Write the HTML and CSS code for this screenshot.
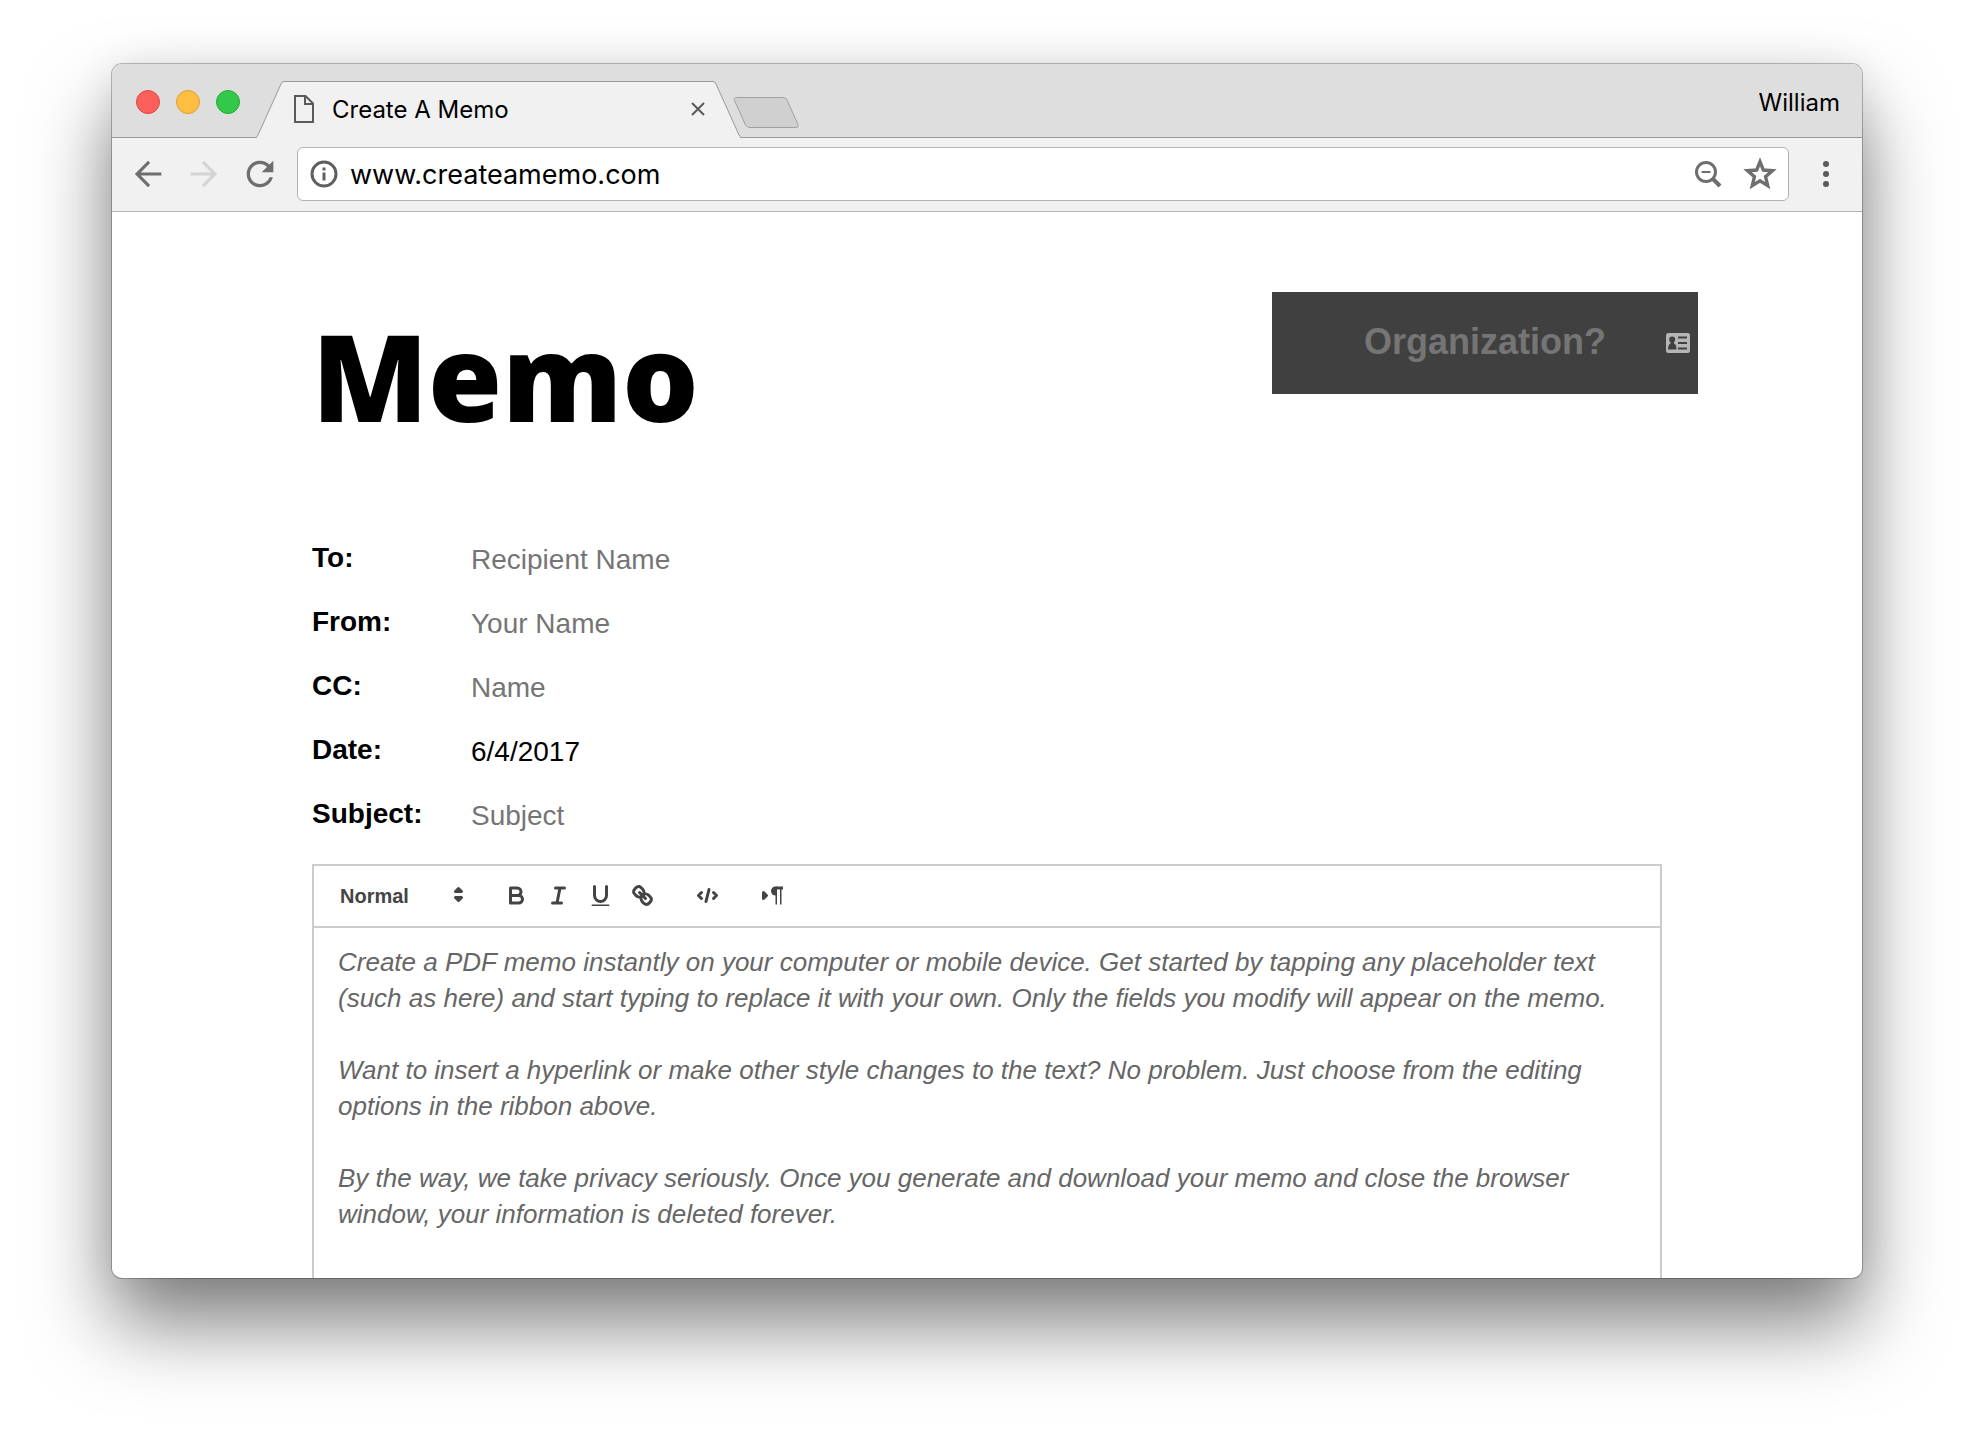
FILE: index.html
```html
<!DOCTYPE html>
<html lang="en">
<head>
<meta charset="utf-8">
<meta name="viewport" content="width=device-width, initial-scale=1">
<title>Create A Memo</title>
<link rel="stylesheet" href="styles.css">
</head>
<body>
<div class="window">
  <div class="tab-strip">
    <div class="lights">
      <button class="light light-close" aria-label="Close window"></button>
      <button class="light light-minimize" aria-label="Minimize window"></button>
      <button class="light light-zoom" aria-label="Zoom window"></button>
    </div>
    <div class="tab">
      <svg class="slope" viewBox="0 0 28 57" aria-hidden="true"><path class="slope-fill" d="M0 57 Q1 56 2 54 L25 3 Q26 0.5 28 0.500 V57Z"/><path class="slope-line" d="M0 56.500 Q1 56 2 54 L25 3 Q26 0.500 28 0.500"/></svg>
      <div class="tab-body">
        <svg class="file-icon" viewBox="0 0 20 28" aria-hidden="true"><path d="M1 1H11.500L19 8.500V27H1Z M11 1V9H19"/></svg>
        <span class="tab-title">Create A Memo</span>
        <button class="tab-close" aria-label="Close tab"><svg viewBox="0 0 14 14"><path d="M1 1L13 13M13 1L1 13"/></svg></button>
      </div>
      <svg class="slope" viewBox="0 0 28 57" aria-hidden="true"><path class="slope-fill" d="M28 57 Q27 56 26 54 L3 3 Q2 0.500 0 0.500 V57Z"/><path class="slope-line" d="M28 56.500 Q27 56 26 54 L3 3 Q2 0.500 0 0.500"/></svg>
    </div>
    <button class="new-tab" aria-label="New tab"><svg viewBox="0 0 66 32"><path d="M4 .5H50Q53 .5 54 3L65 27.500Q66 30.500 63 30.500H17Q14 30.500 12.500 28L1.500 3.500Q.5 .5 4 .5Z"/></svg></button>
    <button class="profile">William</button>
  </div>

  <div class="nav-bar">
    <div class="nav-buttons">
      <button class="nav-button" aria-label="Back"><svg viewBox="0 0 24 24"><path d="M20 11.100H7.600l5.700-5.700L12 4.100 4.100 12l7.900 7.900 1.300-1.300-5.700-5.700H20z"/></svg></button>
      <button class="nav-button" aria-label="Forward" disabled><svg viewBox="0 0 24 24"><path d="M4 11.100h12.400l-5.700-5.700L12 4.100l7.900 7.900-7.900 7.900-1.300-1.300 5.700-5.700H4z"/></svg></button>
      <button class="nav-button" aria-label="Reload"><svg viewBox="0 0 24 24"><path d="M17.650 6.350C16.200 4.900 14.210 4 12 4c-4.420 0-7.990 3.580-7.990 8s3.570 8 7.990 8c3.730 0 6.840-2.550 7.730-6h-2.080c-.82 2.330-3.040 4-5.650 4-3.310 0-6-2.690-6-6s2.690-6 6-6c1.660 0 3.140.69 4.220 1.780L13 11h7V4l-2.350 2.350z"/></svg></button>
    </div>
    <div class="omnibox">
      <svg class="info-icon" viewBox="0 0 28 28" aria-hidden="true"><circle cx="14" cy="14" r="12"/><path d="M14 7.500V10.500M14 12.500V20.500"/></svg>
      <input class="url" type="text" aria-label="Address" value="www.createamemo.com">
      <button class="box-button" aria-label="Zoom out"><svg class="zoom-icon" viewBox="0 0 30 30"><circle cx="13" cy="13" r="9.500"/><path d="M8.500 13H17.500" stroke-width="2"/><path d="M20 20L27 27" stroke-width="4"/></svg></button>
      <button class="box-button" aria-label="Bookmark this page"><svg class="star-icon" viewBox="0 0 30 30"><path d="M15 4.200L18 11.500L26 12.100L19.900 17.300L21.800 25.300L15 21L8.200 25.300L10.100 17.300L4 12.100L12 11.500Z"/></svg></button>
    </div>
    <button class="menu" aria-label="Menu"><svg viewBox="0 0 6 26"><circle cx="3" cy="3" r="3"/><circle cx="3" cy="13" r="3"/><circle cx="3" cy="23" r="3"/></svg></button>
  </div>

  <main class="page">
    <header class="memo-head">
      <h1 class="memo-title">Memo</h1>
      <div class="organization">
        <input class="organization-input" type="text" aria-label="Organization" placeholder="Organization?">
        <svg class="card-icon" viewBox="0 0 24 20" aria-hidden="true"><rect class="card" width="24" height="20" rx="2.500"/><g class="card-ink"><circle cx="6.200" cy="6.500" r="3"/><path d="M4.500 8H8V10.500Q10.500 11.500 10.500 16.500H2Q2 11.500 4.500 10.500Z"/><path d="M12 3.500H21V5.500H12ZM12 9H21V11H12ZM12 14.500H21V16.500H12Z"/></g></svg>
      </div>
    </header>

    <form class="fields">
      <div class="field"><label for="to">To:</label><input id="to" type="text" placeholder="Recipient Name"></div>
      <div class="field"><label for="from">From:</label><input id="from" type="text" placeholder="Your Name"></div>
      <div class="field"><label for="cc">CC:</label><input id="cc" type="text" placeholder="Name"></div>
      <div class="field"><label for="date">Date:</label><input id="date" type="text" value="6/4/2017"></div>
      <div class="field"><label for="subject">Subject:</label><input id="subject" type="text" placeholder="Subject"></div>
    </form>

    <section class="editor">
      <div class="ribbon">
        <div class="picker">
          <select aria-label="Text style"><option>Normal</option><option>Large</option><option>Huge</option></select>
          <svg class="picker-icon" viewBox="0 0 18 18" aria-hidden="true"><polygon class="both" points="7 11 9 13 11 11 7 11"/><polygon class="both" points="7 7 9 5 11 7 7 7"/></svg>
        </div>
        <div class="group">
          <button aria-label="Bold"><svg viewBox="0 0 18 18"><path d="M5,4H9.500A2.500,2.500,0,0,1,12,6.500v0A2.500,2.500,0,0,1,9.500,9H5V4Z"/><path d="M5,9h5.500A2.500,2.500,0,0,1,13,11.500v0A2.500,2.500,0,0,1,10.500,14H5V9Z"/></svg></button>
          <button aria-label="Italic"><svg viewBox="0 0 18 18"><path d="M7 4H13M5 14H11M8 14L10 4"/></svg></button>
          <button aria-label="Underline"><svg viewBox="0 0 18 18"><path d="M5,3V9a4.012,4.012,0,0,0,4,4H9a4.012,4.012,0,0,0,4-4V3"/><rect class="solid" x="3" y="15" width="12" height="1" rx=".5"/></svg></button>
          <button aria-label="Link"><svg viewBox="0 0 18 18"><path d="M7 7L11 11"/><path d="M8.900,4.577a3.476,3.476,0,0,1,.36,4.679A3.476,3.476,0,0,1,4.577,8.900C3.185,7.500,2.035,6.400,4.217,4.217S7.500,3.185,8.900,4.577Z"/><path d="M13.423,9.100a3.476,3.476,0,0,0-4.679-.36,3.476,3.476,0,0,0,.36,4.679c1.392,1.392,2.500,2.542,4.679.36S14.815,10.500,13.423,9.100Z"/></svg></button>
        </div>
        <div class="group">
          <button aria-label="Code"><svg viewBox="0 0 18 18"><path d="M5 7L3 9L5 11M13 7L15 9L13 11M10 5L8 13"/></svg></button>
        </div>
        <div class="group">
          <button aria-label="Text direction"><svg viewBox="0 0 18 18"><polygon class="both" points="3 11 5 9 3 7 3 11"/><path class="solid" d="M11,3a3,3,0,0,0,0,6h1V3H11Z"/><path class="solid" d="M11 3H16V5H15V15H14V5H12V15H11Z"/></svg></button>
        </div>
      </div>
      <div class="editor-body" contenteditable="true" role="textbox" aria-multiline="true" aria-label="Memo text" spellcheck="false">
        <p>Create a PDF memo instantly on your computer or mobile device. Get started by tapping any placeholder text (such as here) and start typing to replace it with your own. Only the fields you modify will appear on the memo.</p>
        <p>Want to insert a hyperlink or make other style changes to the text? No problem. Just choose from the editing options in the ribbon above.</p>
        <p>By the way, we take privacy seriously. Once you generate and download your memo and close the browser window, your information is deleted forever.</p>
      </div>
    </section>
  </main>
</div>
</body>
</html>
```
FILE: styles.css
```css
* {
  box-sizing: border-box;
}

body {
  margin: 0;
  min-height: 100vh;
  padding: 64px 112px 160px;
  display: flex;
  background: #fff;
  color: #000;
  font-family: "Liberation Sans", Arial, sans-serif;
  overflow-x: hidden;
}

button,
input,
select {
  margin: 0;
  padding: 0;
  border: 0;
  background: none;
  color: inherit;
  font: inherit;
}

svg {
  display: block;
  flex: none;
}

.window {
  flex: 1;
  min-width: 0;
  display: flex;
  flex-direction: column;
  overflow: hidden;
  border-radius: 10px;
  background: #fff;
  box-shadow: 0 0 0 1px rgba(0, 0, 0, 0.25), 0 46px 80px rgba(0, 0, 0, 0.5), 0 0 40px rgba(0, 0, 0, 0.08);
}

/* Tab strip */
.tab-strip {
  display: flex;
  align-items: flex-end;
  height: 74px;
  padding: 0 22px 0 24px;
  border-bottom: 1px solid #999;
  background: #dedede;
  font-family: Inter, sans-serif;
  font-size: 24px;
}

.lights {
  display: flex;
  gap: 16px;
  align-self: center;
  padding: 2px 16px 0 0;
}

.light {
  width: 24px;
  height: 24px;
  border: 1px solid;
  border-radius: 50%;
}

.light-close {
  border-color: #e0443e;
  background: #fc605b;
}

.light-minimize {
  border-color: #dea034;
  background: #fdbe41;
}

.light-zoom {
  border-color: #27aa35;
  background: #34c84a;
}

.tab {
  display: flex;
  flex: 0 1 485px;
  min-width: 0;
  height: 57px;
  margin-bottom: -1px;
}

.slope {
  width: 28px;
  height: 57px;
}

.slope-fill {
  fill: #f1f1f1;
}

.slope-line {
  fill: none;
  stroke: #999;
}

.tab-body {
  flex: 1;
  min-width: 0;
  display: flex;
  align-items: center;
  padding: 0 8px 2px 10px;
  border-top: 1px solid #999;
  background: #f1f1f1;
}

.file-icon {
  width: 20px;
  height: 28px;
  fill: none;
  stroke: #5a5a5a;
  stroke-width: 2;
}

.tab-title {
  flex: 1;
  padding-left: 18px;
  white-space: nowrap;
}

.tab-close svg {
  width: 14px;
  height: 14px;
  stroke: #5a5a5a;
  stroke-width: 2;
}

.new-tab {
  align-self: flex-end;
  margin: 0 0 8px -8px;
}

.new-tab svg {
  width: 66px;
  height: 32px;
  fill: #d0d0d0;
  stroke: #a0a0a0;
}

.profile {
  align-self: center;
  margin-left: auto;
  padding-top: 4px;
}

/* Navigation bar */
.nav-bar {
  display: flex;
  align-items: center;
  height: 74px;
  padding: 0 0 1px 16px;
  border-bottom: 1px solid #b2b2b2;
  background: #f1f1f1;
}

.nav-buttons {
  display: flex;
  gap: 16px;
  padding-right: 17px;
}

.nav-button {
  color: #6e6e6e;
}

.nav-button:disabled {
  color: #d4d4d4;
}

.nav-button svg {
  width: 40px;
  height: 40px;
  fill: currentColor;
}

.omnibox {
  flex: 1;
  min-width: 0;
  display: flex;
  align-items: center;
  height: 54px;
  padding: 0 11px 0 12px;
  border: 1px solid #b2b2b2;
  border-radius: 6px;
  background: #fff;
}

.info-icon {
  width: 28px;
  height: 28px;
  fill: none;
  stroke: #5f5f5f;
  stroke-width: 3;
}

.url {
  flex: 1;
  min-width: 0;
  padding-left: 12px;
  font-family: Inter, sans-serif;
  font-size: 27px;
}

.box-button {
  margin-left: 20px;
}

.zoom-icon,
.star-icon {
  fill: none;
  stroke: #6e6e6e;
  stroke-width: 3;
}

.zoom-icon {
  width: 30px;
  height: 30px;
}

.star-icon {
  width: 34px;
  height: 34px;
}

.menu {
  display: flex;
  justify-content: center;
  width: 73px;
}

.menu svg {
  width: 6px;
  height: 26px;
  fill: #5a5a5a;
}

/* Memo page */
.page {
  flex: 1;
  display: flex;
  flex-direction: column;
  padding: 80px 200px 0;
}

.memo-head {
  display: flex;
  justify-content: space-between;
  align-items: flex-start;
  margin: 0 -36px 80px 0;
}

.memo-title {
  margin: 12px 0 0;
  font-family: "Open Sans", Inter, sans-serif;
  font-size: 120px;
  font-weight: 800;
  line-height: 144px;
}

.organization {
  position: relative;
  width: 426px;
  height: 102px;
  background: #404040;
}

.organization-input {
  width: 100%;
  height: 100px;
  color: #fff;
  font-size: 36px;
  font-weight: 700;
  text-align: center;
}

.organization-input::placeholder,
.field input::placeholder {
  color: #757575;
  opacity: 1;
}

.card-icon {
  position: absolute;
  top: 41px;
  right: 8px;
  width: 24px;
  height: 20px;
}

.card {
  fill: #b5b5b5;
}

.card-ink {
  fill: #404040;
}

.field {
  display: flex;
  align-items: center;
  height: 64px;
  font-size: 28px;
  line-height: 32px;
}

.field label {
  width: 159px;
  padding-bottom: 4px;
  font-weight: 700;
}

.field input {
  flex: 1;
  min-width: 0;
}

/* Editor */
.editor {
  flex: 1;
  margin-top: 16px;
  border: 2px solid #ccc;
  border-bottom: 0;
}

.ribbon {
  display: flex;
  align-items: center;
  gap: 23px;
  height: 62px;
  padding: 0 11px 2px;
  border-bottom: 2px solid #ccc;
  color: #444;
}

.ribbon svg {
  width: 27px;
  height: 27px;
  fill: none;
  stroke: currentColor;
  stroke-width: 2;
  stroke-linecap: round;
  stroke-linejoin: round;
}

.ribbon .both {
  fill: currentColor;
}

.ribbon .solid {
  fill: currentColor;
  stroke: none;
}

.picker {
  position: relative;
  width: 147px;
}

.picker select {
  width: 100%;
  height: 36px;
  padding: 2px 0 0 15px;
  appearance: none;
  font-size: 20px;
  font-weight: 700;
}

.picker-icon {
  position: absolute;
  top: 4px;
  right: 0;
  pointer-events: none;
}

.group {
  display: flex;
}

.group button {
  display: flex;
  justify-content: center;
  width: 42px;
}

.editor-body {
  padding: 16px 24px 36px;
  color: #666;
  font-size: 26px;
  font-style: italic;
  line-height: 36px;
  outline: 0;
}

.editor-body p {
  margin: 0 0 36px;
}

.editor-body p:last-child {
  margin-bottom: 0;
}
```
